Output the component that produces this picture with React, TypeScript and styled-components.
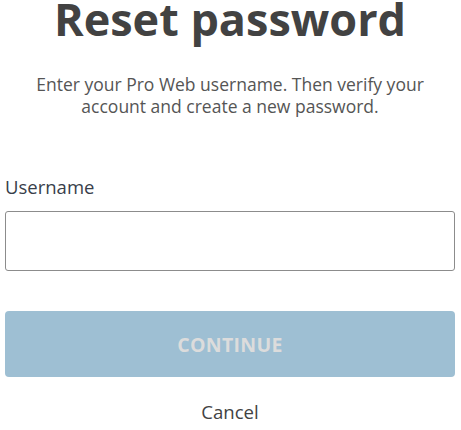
import React from "react";
import styled, { createGlobalStyle } from "styled-components";

const Global = createGlobalStyle`
  html, body { margin: 0; padding: 0; background: #ffffff; }
  body { font-family: "Open Sans", "Noto Sans", sans-serif; }
  * { box-sizing: border-box; }
`;

const Page = styled.main`
  width: 461px;
  padding: 0 6px 0 5px;
  display: flex;
  flex-direction: column;
`;

const Title = styled.h1`
  margin: -4px 0 0;
  font-size: 45px;
  line-height: 46px;
  font-weight: 700;
  color: #424242;
  text-align: center;
`;

const Intro = styled.p`
  margin: 31px 0 0;
  font-size: 17.5px;
  line-height: 22px;
  color: #555555;
  text-align: center;
  padding: 0 10px;
`;

const Field = styled.div`
  margin-top: 58px;
  display: flex;
  flex-direction: column;
  gap: 12px;
`;

const Label = styled.label`
  font-size: 18.5px;
  line-height: 24px;
  color: #383e4a;
`;

const Input = styled.input`
  height: 60px;
  width: 100%;
  border: 1px solid #8c8c8c;
  border-radius: 3px;
  font-family: inherit;
  font-size: 17px;
  padding: 0 12px;
  outline: none;
`;

const Continue = styled.button`
  margin-top: 40px;
  height: 66px;
  width: 100%;
  border: none;
  border-radius: 4px;
  background: #9ebfd3;
  color: #dcdcdc;
  font-family: inherit;
  font-size: 19.5px;
  font-weight: 700;
  letter-spacing: 0.3px;
`;

const Cancel = styled.button`
  margin: 22px auto 0;
  background: none;
  border: none;
  font-family: inherit;
  font-size: 18.6px;
  color: #424242;
  padding: 0;
`;

export default function App() {
  return (
    <>
      <Global />
      <Page>
        <Title>Reset password</Title>
        <Intro>Enter your Pro Web username. Then verify your account and create a new password.</Intro>
        <Field>
          <Label htmlFor="username">Username</Label>
          <Input id="username" type="text" />
        </Field>
        <Continue type="button" disabled>CONTINUE</Continue>
        <Cancel type="button">Cancel</Cancel>
      </Page>
    </>
  );
}
